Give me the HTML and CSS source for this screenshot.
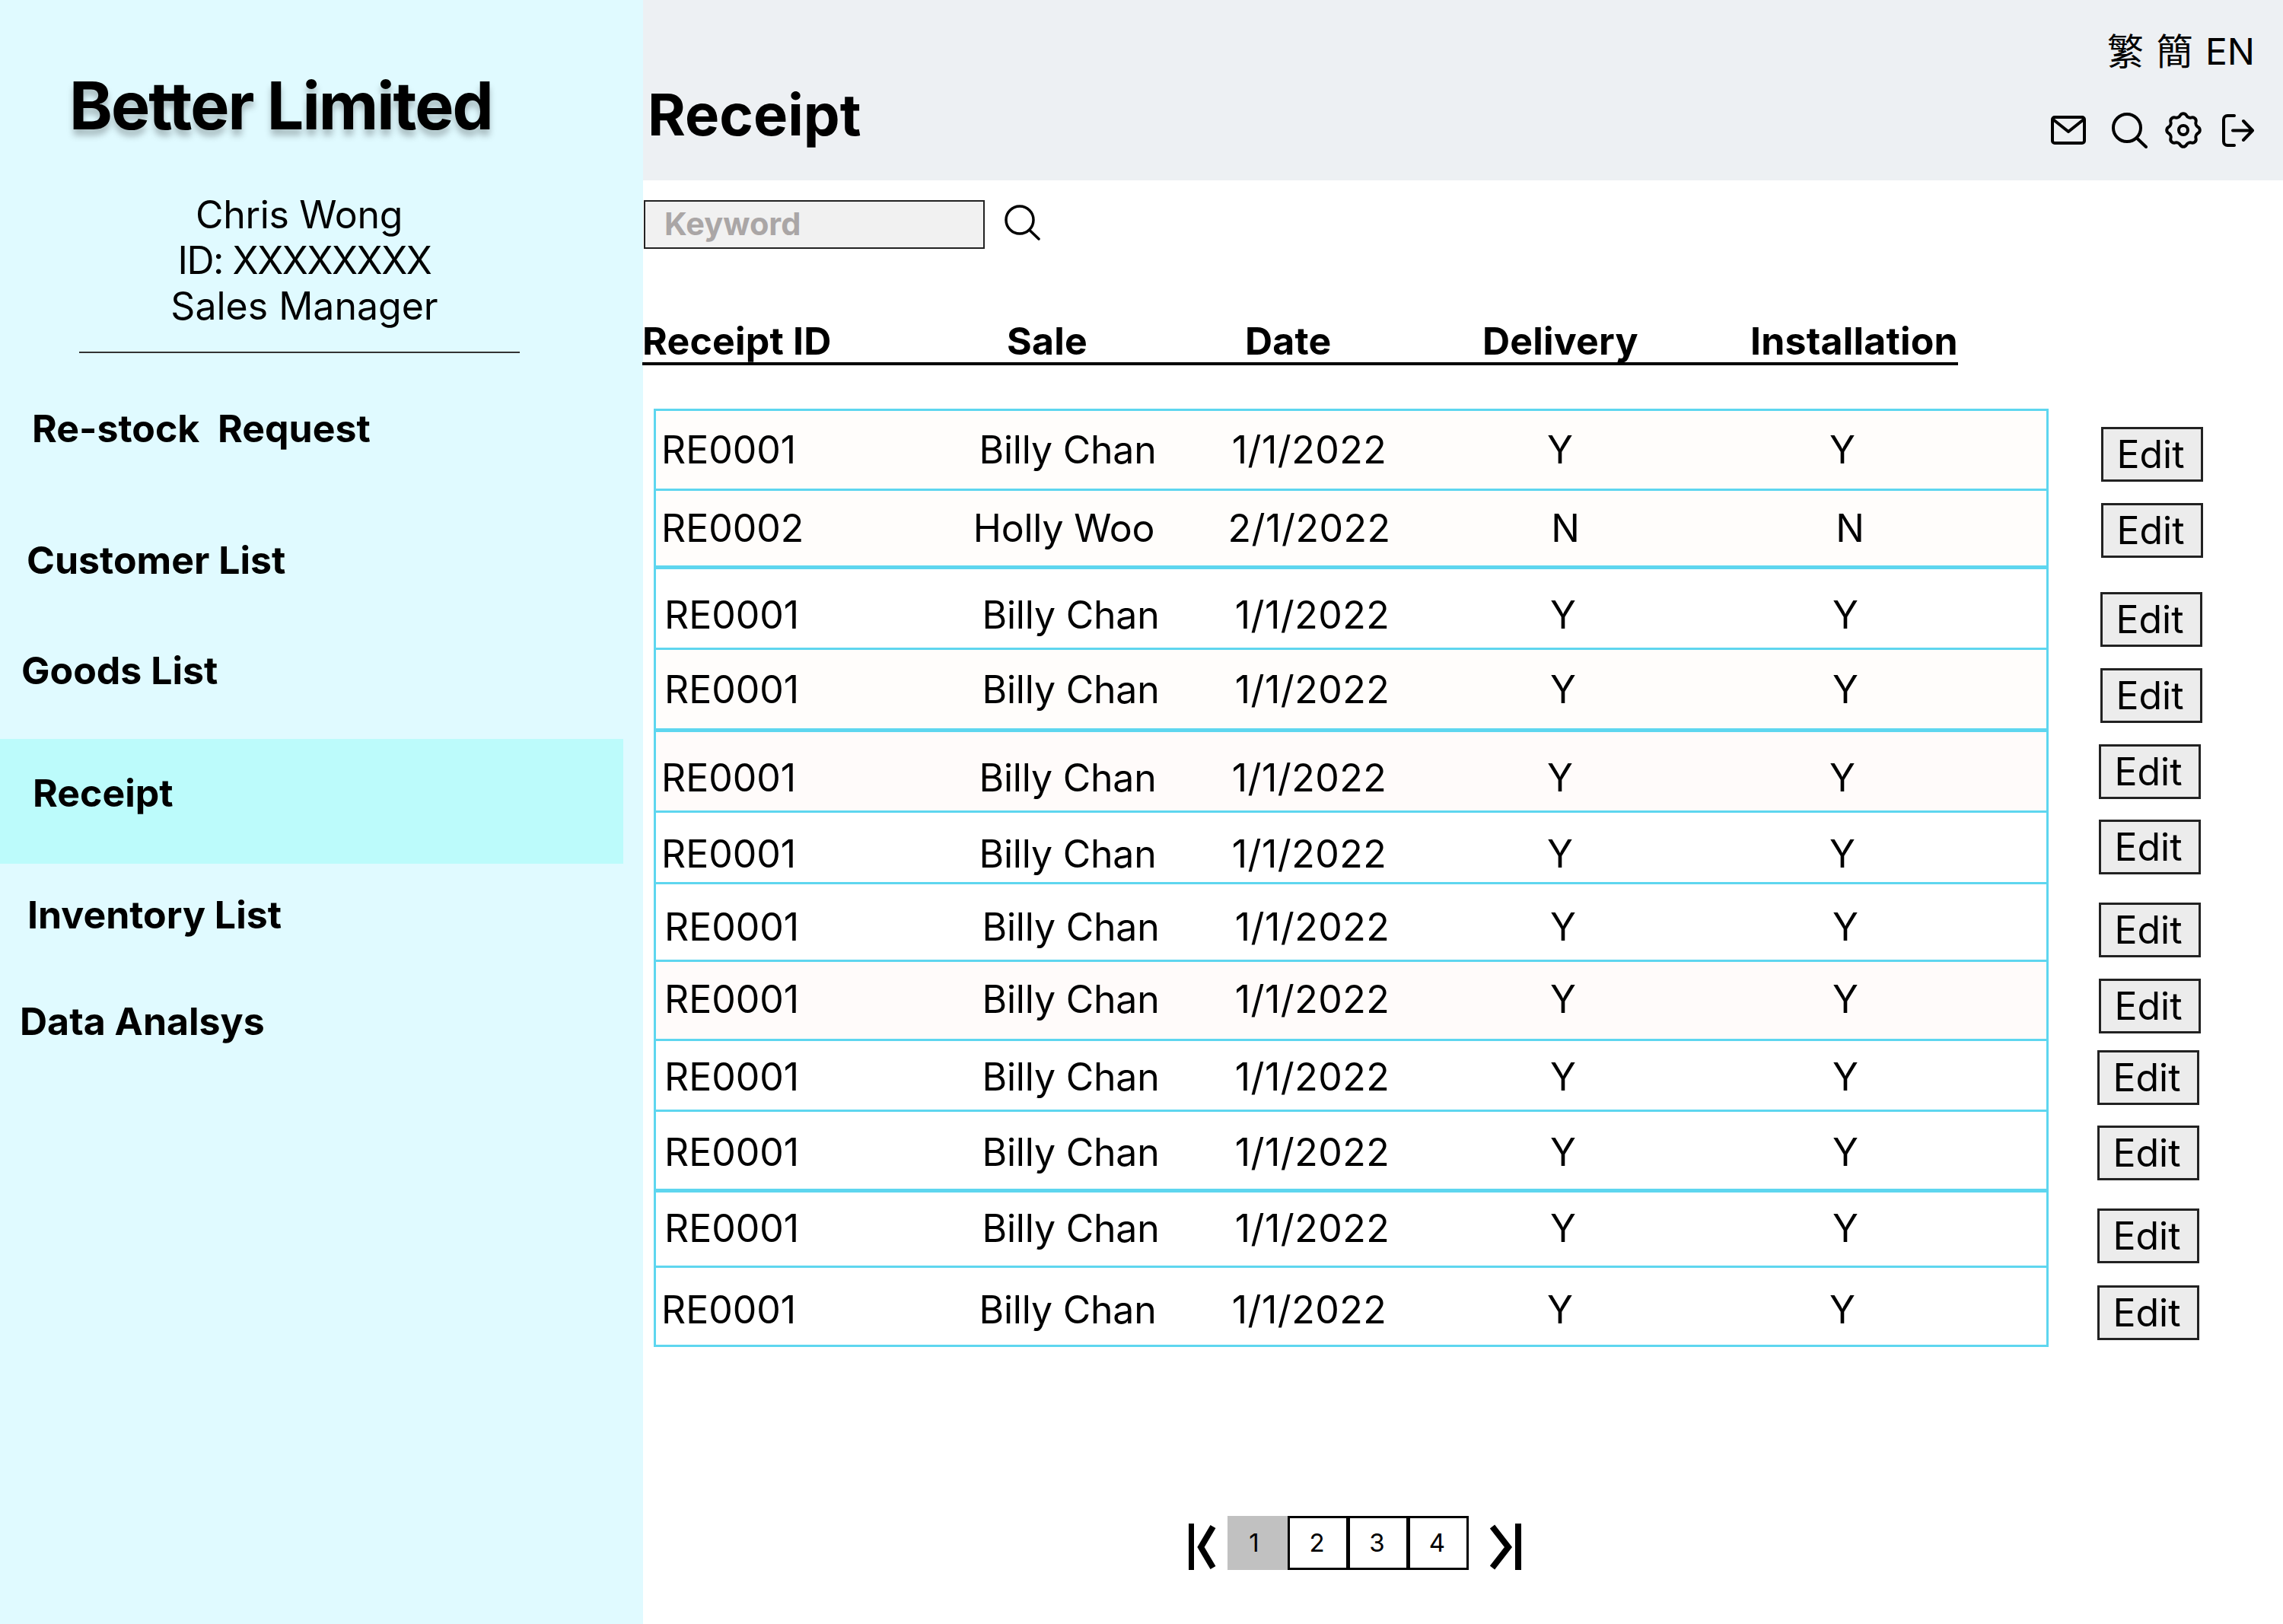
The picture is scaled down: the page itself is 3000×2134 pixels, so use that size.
FILE: index.html
```html
<!DOCTYPE html>
<html lang="en">
<head>
    <meta charset="UTF-8">
    <title>Better Limited - Receipt</title>
    <link rel="stylesheet" href="styles.css">
</head>
<body>
    <aside class="sidebar">
        <h1 class="brand">Better Limited</h1>
        <div class="user">
            <div class="user_name">Chris Wong</div>
            <div class="user_id">ID: XXXXXXXX</div>
            <div>Sales Manager</div>
        </div>
        <div class="divider"></div>
        <nav class="nav">
            <a class="nav_item nav_restock">Re-stock &nbsp;Request</a>
            <a class="nav_item nav_customer">Customer List</a>
            <a class="nav_item nav_goods">Goods List</a>
            <a class="nav_item nav_receipt">Receipt</a>
            <a class="nav_item nav_inventory">Inventory List</a>
            <a class="nav_item nav_data">Data Analsys</a>
        </nav>
    </aside>

    <main class="main">
        <header class="topbar">
            <h2 class="page_title">Receipt</h2>
            <div class="topbar_right">
                <div class="lang" lang="zh-Hant">繁 簡 EN</div>
                <div class="icons">
                    <svg class="ic ic_mail" width="46" height="38" viewBox="0 0 46 38">
                        <rect x="2" y="2" width="42" height="34" rx="3"/>
                        <path d="M3 5l20 16L43 5"/>
                    </svg>
                    <svg class="ic ic_search" width="47" height="47" viewBox="0 0 47 47">
                        <circle cx="20" cy="20" r="18"/>
                        <path d="M33.500 34L45 45"/>
                    </svg>
                    <svg class="ic ic_gear" width="50" height="50" viewBox="0 0 50 50">
                        <path d="M21.100 5.400A4.600 4.600 0 0 1 28.900 5.400A6 6 0 0 0 36.100 8.400A4.600 4.600 0 0 1 41.600 13.900A6 6 0 0 0 44.600 21.100A4.600 4.600 0 0 1 44.600 28.900A6 6 0 0 0 41.600 36.100A4.600 4.600 0 0 1 36.100 41.600A6 6 0 0 0 28.900 44.600A4.600 4.600 0 0 1 21.100 44.600A6 6 0 0 0 13.900 41.600A4.600 4.600 0 0 1 8.400 36.100A6 6 0 0 0 5.400 28.900A4.600 4.600 0 0 1 5.400 21.100A6 6 0 0 0 8.400 13.900A4.600 4.600 0 0 1 13.900 8.400A6 6 0 0 0 21.100 5.400z"/>
                        <circle cx="25" cy="25" r="6"/>
                    </svg>
                    <svg class="ic ic_logout" width="42" height="43" viewBox="0 0 42 43">
                        <path d="M16 2H7a5 5 0 0 0-5 5v29a5 5 0 0 0 5 5h9"/>
                        <path d="M14 21.500h26M28 9l12 12.500L28 34"/>
                    </svg>
                </div>
            </div>
        </header>

        <div class="search">
            <div class="search_box">Keyword</div>
            <svg class="ic ic_find" width="47" height="47" viewBox="0 0 47 47">
                <circle cx="20" cy="20" r="18"/>
                <path d="M33.500 34L45 45"/>
            </svg>
        </div>

        <div class="thead">
            <span>Receipt ID</span>
            <span>Sale</span>
            <span>Date</span>
            <span>Delivery</span>
            <span>Installation</span>
        </div>

        <div class="list">
            <div class="table">
                <div class="row tint"><span>RE0001</span><span>Billy Chan</span><span>1/1/2022</span><span>Y</span><span>Y</span></div>
                <div class="row tint row_n"><span>RE0002</span><span>Holly Woo</span><span>2/1/2022</span><span>N</span><span>N</span></div>
                <div class="row nudge"><span>RE0001</span><span>Billy Chan</span><span>1/1/2022</span><span>Y</span><span>Y</span></div>
                <div class="row tint nudge"><span>RE0001</span><span>Billy Chan</span><span>1/1/2022</span><span>Y</span><span>Y</span></div>
                <div class="row pink"><span>RE0001</span><span>Billy Chan</span><span>1/1/2022</span><span>Y</span><span>Y</span></div>
                <div class="row"><span>RE0001</span><span>Billy Chan</span><span>1/1/2022</span><span>Y</span><span>Y</span></div>
                <div class="row nudge"><span>RE0001</span><span>Billy Chan</span><span>1/1/2022</span><span>Y</span><span>Y</span></div>
                <div class="row pink nudge"><span>RE0001</span><span>Billy Chan</span><span>1/1/2022</span><span>Y</span><span>Y</span></div>
                <div class="row nudge"><span>RE0001</span><span>Billy Chan</span><span>1/1/2022</span><span>Y</span><span>Y</span></div>
                <div class="row nudge"><span>RE0001</span><span>Billy Chan</span><span>1/1/2022</span><span>Y</span><span>Y</span></div>
                <div class="row nudge"><span>RE0001</span><span>Billy Chan</span><span>1/1/2022</span><span>Y</span><span>Y</span></div>
                <div class="row"><span>RE0001</span><span>Billy Chan</span><span>1/1/2022</span><span>Y</span><span>Y</span></div>
            </div>
            <div class="edits">
                <button class="edit">Edit</button>
                <button class="edit">Edit</button>
                <button class="edit">Edit</button>
                <button class="edit">Edit</button>
                <button class="edit">Edit</button>
                <button class="edit">Edit</button>
                <button class="edit">Edit</button>
                <button class="edit">Edit</button>
                <button class="edit">Edit</button>
                <button class="edit">Edit</button>
                <button class="edit">Edit</button>
                <button class="edit">Edit</button>
            </div>
        </div>

        <div class="pager">
            <svg class="pager_first" width="36" height="61" viewBox="0 0 36 61">
                <rect x="0" y="0" width="7" height="61"/>
                <path d="M32 4L16 31L32 58"/>
            </svg>
            <div class="pages">
                <span class="page page_on">1</span>
                <span class="page">2</span>
                <span class="page">3</span>
                <span class="page">4</span>
            </div>
            <svg class="pager_last" width="42" height="61" viewBox="0 0 42 61">
                <rect x="34" y="0" width="8" height="61"/>
                <path d="M4 4L25 31L4 58"/>
            </svg>
        </div>
    </main>
</body>
</html>
```

FILE: styles.css
```css
* {
    box-sizing: border-box;
}

body, html {
    margin: 0;
    height: 100%;
    overflow: hidden;
    background-color: #fff;
}

body {
    display: flex;
    width: 3000px;
    height: 2134px;
    color: #000;
    font-family: Inter, "Noto Sans CJK TC", sans-serif;
}

/* sidebar */
.sidebar {
    width: 845px;
    flex: none;
    padding-top: 89px;
    background-color: #e0faff;
}

.brand {
    margin: 0 0 0 91px;
    font-size: 86px;
    line-height: 100px;
    font-weight: 700;
    letter-spacing: -2px;
    white-space: nowrap;
    text-shadow: 0 8px 8px rgba(0, 0, 0, 0.25);
}

.user {
    width: 800px;
    margin-top: 63px;
    font-size: 50px;
    line-height: 60px;
    text-align: center;
}

.user_name {
    padding-right: 14px;
    letter-spacing: -0.300px;
}

.user_id {
    letter-spacing: -1.500px;
}

.divider {
    width: 579px;
    height: 2px;
    margin: 30px 0 0 104px;
    background-color: #333;
}

.nav {
    display: flex;
    flex-direction: column;
    margin-top: 69px;
}

.nav_item {
    height: 60px;
    font-size: 50px;
    line-height: 60px;
    font-weight: 700;
    white-space: nowrap;
}

.nav_restock { padding-left: 42px; }
.nav_customer { margin-top: 113px; padding-left: 35px; }
.nav_goods { margin-top: 85px; padding-left: 28px; }
.nav_inventory { margin-top: 37px; padding-left: 36px; }
.nav_data { margin-top: 80px; padding-left: 26px; }

.nav_receipt {
    width: 819px;
    height: 164px;
    margin-top: 60px;
    padding: 41px 0 0 43px;
    background-color: #bcfbfb;
}

/* top bar */
.main {
    flex: 1;
    min-width: 0;
}

.topbar {
    display: flex;
    justify-content: space-between;
    height: 237px;
    background-color: #edf0f3;
}

.page_title {
    margin: 105px 0 0 6px;
    font-size: 76px;
    line-height: 90px;
    font-weight: 700;
}

.topbar_right {
    display: flex;
    flex-direction: column;
    align-items: flex-end;
    padding: 38px 37px 0 0;
}

.lang {
    height: 60px;
    font-size: 48px;
    line-height: 60px;
    word-spacing: 3px;
}

.icons {
    display: flex;
    align-items: center;
    height: 50px;
    margin: 48px 1px 0 0;
}

.ic {
    fill: none;
    stroke: #000;
    stroke-width: 4;
    stroke-linecap: round;
    stroke-linejoin: round;
}

.ic_search { margin-left: 34px; }
.ic_gear { margin-left: 22px; }
.ic_logout { margin-left: 26px; }

/* search */
.search {
    display: flex;
    align-items: flex-start;
    margin: 26px 0 0 1px;
}

.search_box {
    width: 448px;
    height: 64px;
    padding-left: 25px;
    border: 2px solid #222;
    background-color: #f1f1f1;
    color: #aaa6a6;
    font-size: 41.500px;
    line-height: 58px;
    font-weight: 700;
}

.ic_find {
    margin: 6px 0 0 26px;
    stroke-width: 3.500;
}

/* table */
.thead {
    display: grid;
    grid-template-columns: 479px 313px 312px 352px auto;
    width: 1729px;
    height: 60px;
    margin: 93px 0 0 -1px;
    border-bottom: 4px solid #000;
    font-size: 50px;
    line-height: 57px;
    font-weight: 700;
    letter-spacing: 0.200px;
    white-space: nowrap;
}

.list {
    display: flex;
    align-items: flex-start;
    margin: 57px 0 0 14px;
}

.table {
    width: 1833px;
    flex: none;
    border: 3px solid #5ed6ef;
    border-bottom: 0;
}

.row {
    display: grid;
    grid-template-columns: 381px 306px 329px 330px 412px;
    align-items: center;
    padding-left: 7px;
    border-bottom: 3px solid #5ed6ef;
    font-size: 50px;
    line-height: 60px;
    white-space: nowrap;
}

.row span:not(:first-child) {
    text-align: center;
}

.row span:nth-child(2) { letter-spacing: -0.200px; }
.row span:nth-child(3) { letter-spacing: 0.500px; }

.tint { background-color: #fffdfb; }
.pink { background-color: #fffbfa; }
.nudge { padding-left: 11px; }

.row:nth-child(1) { height: 105px; }
.row:nth-child(2) { height: 103px; padding-bottom: 1px; border-bottom-width: 5px; }
.row:nth-child(3) { height: 106px; padding-top: 16px; }
.row:nth-child(4) { height: 108px; border-bottom-width: 5px; }
.row:nth-child(5) { height: 106px; padding-top: 16px; }
.row:nth-child(6) { height: 94px; padding-top: 16px; }
.row:nth-child(7) { height: 102px; padding-top: 12px; }
.row:nth-child(8) { height: 104px; padding-bottom: 4px; }
.row:nth-child(9) { height: 93px; padding-top: 3px; }
.row:nth-child(10) { height: 106px; padding-top: 5px; border-bottom-width: 5px; }
.row:nth-child(11) { height: 99px; padding-bottom: 3px; }
.row:nth-child(12) { height: 104px; padding-top: 8px; }

.row_n span:nth-child(2) { padding-right: 10px; }
.row_n span:nth-child(4) { padding-left: 14px; }
.row_n span:nth-child(5) { padding-left: 20px; }

.edits {
    display: flex;
    flex-direction: column;
    margin-left: 69px;
}

.edit {
    width: 134px;
    height: 72px;
    padding: 0 4px 0 0;
    border: 3px solid #222;
    border-radius: 0;
    background-color: #ececec;
    color: #000;
    font-family: inherit;
    font-size: 50px;
    line-height: 60px;
}

.edit:nth-child(1) { margin-top: 24px; }
.edit:nth-child(2) { margin-top: 28px; }
.edit:nth-child(3) { margin-top: 45px; margin-left: -1px; }
.edit:nth-child(4) { margin-top: 28px; margin-left: -1px; }
.edit:nth-child(5) { margin-top: 28px; margin-left: -3px; }
.edit:nth-child(6) { margin-top: 27px; margin-left: -3px; }
.edit:nth-child(7) { margin-top: 37px; margin-left: -3px; }
.edit:nth-child(8) { margin-top: 28px; margin-left: -3px; }
.edit:nth-child(9) { margin-top: 22px; margin-left: -5px; }
.edit:nth-child(10) { margin-top: 27px; margin-left: -5px; }
.edit:nth-child(11) { margin-top: 37px; margin-left: -5px; }
.edit:nth-child(12) { margin-top: 29px; margin-left: -5px; }

/* pager */
.pager {
    display: flex;
    align-items: center;
    margin: 222px 0 0 717px;
    height: 71px;
}

.pager svg path {
    fill: none;
    stroke: #000;
    stroke-width: 8;
}

.pager_first {
    margin-top: 10px;
}

.pages {
    display: flex;
    margin-left: 16px;
}

.page {
    width: 80px;
    height: 71px;
    margin-left: -1px;
    padding-right: 3px;
    border: 3px solid #000;
    font-size: 33px;
    line-height: 65px;
    text-align: center;
}

.page_on {
    padding-right: 10px;
    border-color: #c1c1c1;
    background-color: #c1c1c1;
}

.pager_last {
    margin: 10px 0 0 27px;
}
```
